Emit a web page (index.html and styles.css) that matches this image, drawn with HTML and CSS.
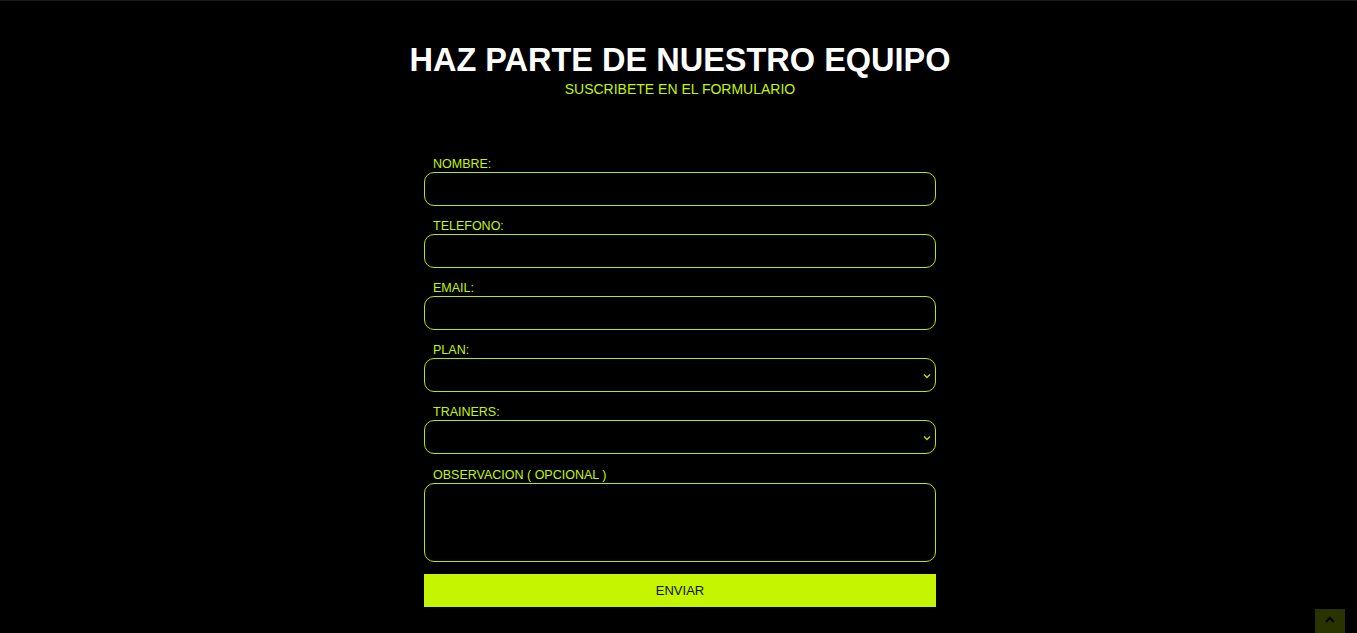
FILE: index.html
```html
<!DOCTYPE html>
<html lang="es">
<head>
<meta charset="utf-8">
<title>Haz parte de nuestro equipo</title>
<link rel="stylesheet" href="styles.css">
</head>
<body>
<main class="page">
  <header class="hero">
    <h1 class="hero-title">HAZ PARTE DE NUESTRO EQUIPO</h1>
    <p class="hero-sub">SUSCRIBETE EN EL FORMULARIO</p>
  </header>
  <form class="form">
    <div class="field">
      <label class="label" for="nombre">NOMBRE:</label>
      <input class="input" id="nombre" type="text">
    </div>
    <div class="field">
      <label class="label" for="tel">TELEFONO:</label>
      <input class="input" id="tel" type="tel">
    </div>
    <div class="field">
      <label class="label" for="email">EMAIL:</label>
      <input class="input" id="email" type="email">
    </div>
    <div class="field">
      <label class="label" for="plan">PLAN:</label>
      <div class="select-wrap">
        <select class="input select" id="plan"><option></option></select>
        <svg class="chev" width="8" height="6" viewBox="0 0 8 6"><path d="M1 1.5 L4 4.5 L7 1.5" fill="none" stroke="#b5e000" stroke-width="1.4"/></svg>
      </div>
    </div>
    <div class="field">
      <label class="label" for="trainers">TRAINERS:</label>
      <div class="select-wrap">
        <select class="input select" id="trainers"><option></option></select>
        <svg class="chev" width="8" height="6" viewBox="0 0 8 6"><path d="M1 1.5 L4 4.5 L7 1.5" fill="none" stroke="#b5e000" stroke-width="1.4"/></svg>
      </div>
    </div>
    <div class="field field-area">
      <label class="label" for="obs">OBSERVACION ( OPCIONAL )</label>
      <textarea class="input area" id="obs"></textarea>
    </div>
    <button class="submit" type="button">ENVIAR</button>
  </form>
</main>
<a class="to-top" href="#">
  <svg width="12" height="8" viewBox="0 0 12 8"><path d="M2 6 L6 2 L10 6" fill="none" stroke="#000" stroke-width="2"/></svg>
</a>
</body>
</html>
```
FILE: styles.css
```css
html, body {
  margin: 0;
  padding: 0;
  background: #000;
  height: 100%;
  overflow: hidden;
}
body {
  border-top: 1px solid #1b1b1b;
  font-family: "Liberation Sans", Arial, sans-serif;
  color: #c5f500;
}
.page {
  display: flex;
  flex-direction: column;
  align-items: center;
  padding-left: 3px;
}
.hero {
  text-align: center;
  padding-top: 39px;
}
.hero-title {
  margin: 0;
  color: #fff;
  font-size: 32.5px;
  font-weight: 700;
  line-height: 40px;
  letter-spacing: 0;
}
.hero-sub {
  margin: 0;
  font-size: 14px;
  line-height: 18px;
  color: #c5f500;
}
.form {
  width: 512px;
  margin-top: 59px;
  display: flex;
  flex-direction: column;
}
.field {
  display: flex;
  flex-direction: column;
  margin-bottom: 13px;
}
.field-area {
  padding-top: 1px;
}
.label {
  padding-left: 9px;
  font-size: 12.5px;
  line-height: 15px;
  color: #c5f500;
}
.input {
  box-sizing: border-box;
  width: 100%;
  height: 34px;
  margin: 0;
  background: #000;
  border: 1px solid #b8e600;
  border-radius: 10px;
  color: #c5f500;
  font-family: inherit;
  outline: none;
}
.select-wrap {
  position: relative;
}
.select {
  appearance: none;
  -webkit-appearance: none;
  display: block;
}
.chev {
  position: absolute;
  right: 5px;
  top: 15px;
}
.area {
  height: 79px;
  resize: none;
  display: block;
}
.submit {
  margin-top: -1px;
  height: 33px;
  width: 100%;
  border: none;
  background: #c5f500;
  color: #111;
  font-family: inherit;
  font-size: 13px;
  cursor: pointer;
}
.to-top {
  position: fixed;
  right: 12px;
  bottom: -6px;
  width: 30px;
  height: 30px;
  background: #283300;
  display: flex;
  justify-content: center;
  padding-top: 7px;
  box-sizing: border-box;
}
```
